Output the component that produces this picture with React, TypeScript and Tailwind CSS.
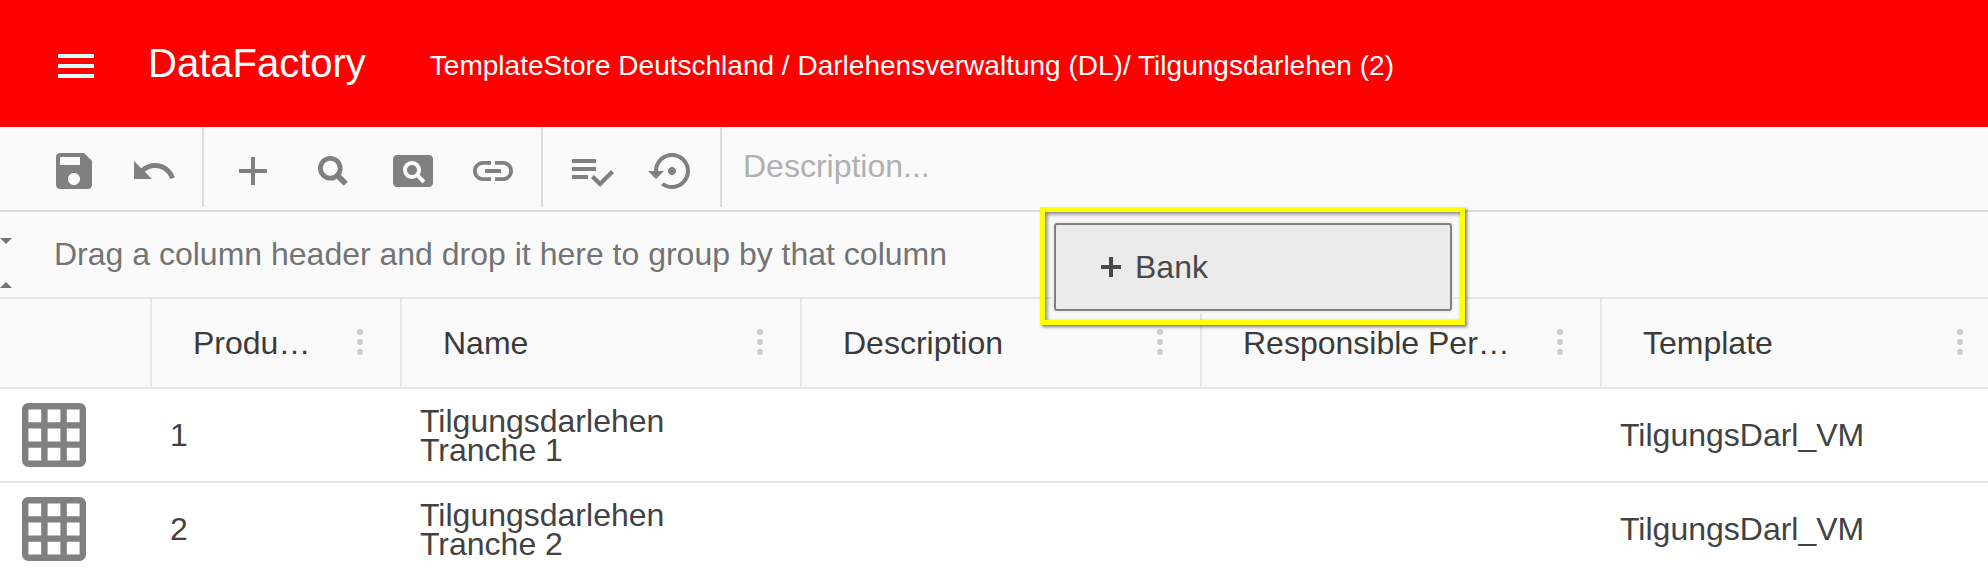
import type { ReactNode } from "react";

const icons = {
  menu: "M3 18h18v-2H3v2zm0-5h18v-2H3v2zm0-7v2h18V6H3z",
  save: "M17 3H5c-1.11 0-2 .9-2 2v14c0 1.1.89 2 2 2h14c1.1 0 2-.9 2-2V7l-4-4zm-5 16c-1.66 0-3-1.34-3-3s1.34-3 3-3 3 1.34 3 3-1.34 3-3 3zm3-10H5V5h10v4z",
  undo: "M12.5 8c-2.65 0-5.05.99-6.9 2.6L2 7v9h9l-3.62-3.62c1.39-1.16 3.16-1.88 5.12-1.88 3.54 0 6.55 2.31 7.6 5.5l2.37-.78C21.08 11.03 17.15 8 12.5 8z",
  add: "M19 13h-6v6h-2v-6H5v-2h6V5h2v6h6v2z",
  pageview: "M11.5 9C10.12 9 9 10.12 9 11.5s1.12 2.5 2.5 2.5 2.5-1.12 2.5-2.5S12.88 9 11.5 9zM20 4H4c-1.1 0-2 .9-2 2v12c0 1.1.9 2 2 2h16c1.1 0 2-.9 2-2V6c0-1.1-.9-2-2-2zm-3.21 14.21l-2.91-2.91c-.69.44-1.51.7-2.39.7C9.01 16 7 13.99 7 11.5S9.01 7 11.5 7 16 9.01 16 11.5c0 .88-.26 1.69-.7 2.39l2.91 2.9-1.42 1.42z",
  link: "M3.9 12c0-1.71 1.39-3.1 3.1-3.1h4V7H7c-2.76 0-5 2.24-5 5s2.24 5 5 5h4v-1.9H7c-1.71 0-3.1-1.39-3.1-3.1zM8 13h8v-2H8v2zm9-6h-4v1.9h4c1.71 0 3.1 1.39 3.1 3.1s-1.39 3.1-3.1 3.1h-4V17h4c2.76 0 5-2.24 5-5s-2.24-5-5-5z",
  check: "M14 10H2v2h12v-2zm0-4H2v2h12V6zM2 16h8v-2H2v2zm19.5-4.5L23 13l-6.99 7-4.51-4.5L13 14l3.01 3 5.49-5.5z",
  restore: "M14 12c0-1.1-.9-2-2-2s-2 .9-2 2 .9 2 2 2 2-.9 2-2zm-2-9c-4.97 0-9 4.03-9 9H0l4 4 4-4H5c0-3.87 3.13-7 7-7s7 3.13 7 7-3.13 7-7 7c-1.51 0-2.91-.49-4.06-1.3l-1.42 1.44C8.04 20.3 9.94 21 12 21c4.97 0 9-4.03 9-9s-4.03-9-9-9z",
};

function Icon({ name, className = "" }: { name: keyof typeof icons; className?: string }) {
  return (
    <svg viewBox="0 0 24 24" fill="currentColor" className={`size-12 shrink-0 ${className}`}>
      <path d={icons[name]} />
    </svg>
  );
}

function GridIcon() {
  return (
    <svg viewBox="2 2 20 20" fill="currentColor" className="size-16 shrink-0">
      <path d="M20 2H4c-1.1 0-2 .9-2 2v16c0 1.1.9 2 2 2h16c1.1 0 2-.9 2-2V4c0-1.1-.9-2-2-2zM8 20H4v-4h4v4zm0-6H4v-4h4v4zm0-6H4V4h4v4zm6 12h-4v-4h4v4zm0-6h-4v-4h4v4zm0-6h-4V4h4v4zm6 12h-4v-4h4v4zm0-6h-4v-4h4v4zm0-6h-4V4h4v4z" />
    </svg>
  );
}

function SearchIcon() {
  return (
    <svg viewBox="0 0 24 24" fill="none" stroke="currentColor" className="size-12 shrink-0">
      <circle cx="10.65" cy="10.65" r="4.95" strokeWidth="2.4" />
      <path d="M14 14L18.4 18.4" strokeWidth="2.9" />
    </svg>
  );
}

function ToolGroup({ children, className }: { children: ReactNode; className: string }) {
  return (
    <div className={`flex h-20 shrink-0 gap-8 border-r-2 border-[#dcdcdc] pt-5 ${className}`}>{children}</div>
  );
}

function HeaderCell({ title, className = "w-[400px]" }: { title: string; className?: string }) {
  return (
    <div className={`flex shrink-0 items-center border-l-2 border-[#e6e6e6] pl-[41px] pr-[37px] ${className}`}>
      <span className="min-w-0 flex-1 truncate pr-8 leading-[40px]">{title}</span>
      <span className="mb-0.5 flex shrink-0 flex-col gap-1">
        <i className="size-1.5 rounded-full bg-[#ccc]" />
        <i className="size-1.5 rounded-full bg-[#ccc]" />
        <i className="size-1.5 rounded-full bg-[#ccc]" />
      </span>
    </div>
  );
}

const rows = [
  { id: 1, name: "Tilgungsdarlehen Tranche 1", template: "TilgungsDarl_VM" },
  { id: 2, name: "Tilgungsdarlehen Tranche 2", template: "TilgungsDarl_VM" },
];

export default function App() {
  return (
    <div className="relative flex h-[570px] w-[1988px] flex-col overflow-hidden bg-white font-['Liberation_Sans',Arial,sans-serif] text-[32px] text-[#424242]">
      <header className="flex h-[127px] shrink-0 items-center bg-[#f00] pl-[52px] text-white">
        <Icon name="menu" className="mt-[5px] text-[#e0ffff]" />
        <h1 className="ml-12 mb-0.5 text-[40px] leading-[46px]">DataFactory</h1>
        <p className="ml-16 mt-1 text-[28px] leading-8 tracking-[0.01px] whitespace-nowrap">
          TemplateStore Deutschland / Darlehensverwaltung (DL)/ Tilgungsdarlehen (2)
        </p>
      </header>

      <div className="flex h-[85px] shrink-0 border-b-2 border-[#dcdcdc] bg-[#fafafa] text-[#808080]">
        <ToolGroup className="w-[204px] pl-[50px]">
          <Icon name="save" />
          <Icon name="undo" />
        </ToolGroup>
        <ToolGroup className="w-[339px] pl-[25px]">
          <Icon name="add" />
          <SearchIcon />
          <Icon name="pageview" />
          <Icon name="link" />
        </ToolGroup>
        <ToolGroup className="w-[179px] pl-[25px]">
          <Icon name="check" />
          <Icon name="restore" />
        </ToolGroup>
        <span className="mt-[19px] pl-[21px] leading-[40px] text-[#b0b0b0]">Description...</span>
      </div>

      <div className="flex h-[87px] shrink-0 items-center border-b-2 border-[#e6e6e6] bg-[#fafafa] text-[#737373]">
        <div className="flex w-[54px] shrink-0 flex-col gap-[38px] pt-[17px]">
          <svg viewBox="0 0 12 6" className="h-1.5 w-3" fill="currentColor"><path d="M0 0h12L6 6z" /></svg>
          <svg viewBox="0 0 12 6" className="h-1.5 w-3" fill="currentColor"><path d="M0 6h12L6 0z" /></svg>
        </div>
        <span className="mb-0.5 leading-[40px]">Drag a column header and drop it here to group by that column</span>
      </div>

      <div className="flex h-[90px] shrink-0 border-b-2 border-[#e6e6e6] bg-[#fafafa] text-[#3a3a3a]">
        <div className="w-[150px] shrink-0" />
        <HeaderCell title="Product ID" className="w-[250px]" />
        <HeaderCell title="Name" />
        <HeaderCell title="Description" />
        <HeaderCell title="Responsible Person" />
        <HeaderCell title="Template" />
      </div>

      {rows.map((row) => (
        <div key={row.id} className="flex h-[94px] shrink-0 items-center border-b-2 border-[#e6e6e6]">
          <div className="flex w-[170px] shrink-0 pl-[22px] text-[#808080]">
            <GridIcon />
          </div>
          <div className="w-[250px] shrink-0">{row.id}</div>
          <div className="w-[1200px] shrink-0 pt-0.5 leading-[29px]">
            <div className="w-[280px]">{row.name}</div>
          </div>
          <div className="shrink-0">{row.template}</div>
        </div>
      ))}

      <div className="absolute left-[1040px] top-[207px] h-[118px] w-[425px] border-[5px] border-[#ff0] pl-[9px] pt-[11px] shadow-[2px_2px_3px_rgba(0,0,0,0.5),inset_2px_2px_4px_rgba(0,0,0,0.5)]">
        <button className="flex h-[88px] w-[398px] items-center rounded-[3px] border-2 border-[#808080] bg-[#ebebeb] pl-[45px] shadow-[0_0_0_2px_#f0f0f0]">
          <svg viewBox="0 0 20 20" className="size-5" stroke="#484848" strokeWidth="4"><path d="M0 10h20M10 0v20" /></svg>
          <span className="ml-[14px] text-[#484848]">Bank</span>
        </button>
      </div>
    </div>
  );
}
